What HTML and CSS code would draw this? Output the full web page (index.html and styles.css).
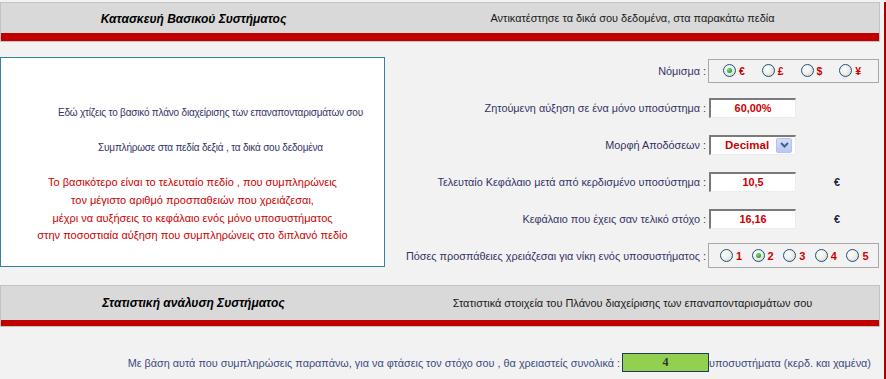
FILE: index.html
```html
<!DOCTYPE html>
<html lang="el">
<head>
<meta charset="utf-8">
<title>Κατασκευή Βασικού Συστήματος</title>
<link rel="stylesheet" href="styles.css">
</head>
<body>
<div class="page">
  <div class="frame">
    <div class="hdr hdr1">
      <div class="hdr-row">
        <div class="hdr-title">Κατασκευή Βασικού Συστήματος</div>
        <div class="hdr-sub">Αντικατέστησε τα δικά σου δεδομένα, στα παρακάτω πεδία</div>
      </div>
      <div class="hdr-red"></div>
    </div>

    <div class="main">
      <div class="info">
        <div class="info-blue">Εδώ χτίζεις το βασικό πλάνο διαχείρισης των επαναπονταρισμάτων σου</div>
        <div class="blank"></div>
        <div class="info-blue">Συμπλήρωσε στα πεδία δεξιά , τα δικά σου δεδομένα</div>
        <div class="blank"></div>
        <div class="info-red">Το βασικότερο είναι το τελευταίο πεδίο , που συμπληρώνεις</div>
        <div class="info-red">τον μέγιστο αριθμό προσπαθειών που χρειάζεσαι,</div>
        <div class="info-red">μέχρι να αυξήσεις το κεφάλαιο ενός μόνο υποσυστήματος</div>
        <div class="info-red">στην ποσοστιαία αύξηση που συμπληρώνεις στο διπλανό πεδίο</div>
      </div>

      <div class="form">
        <div class="lbl">Νόμισμα :</div>
        <div class="ctl">
          <div class="radio-box currency">
            <label class="opt"><span class="radio checked"></span><span class="opt-t">€</span></label>
            <label class="opt"><span class="radio"></span><span class="opt-t">£</span></label>
            <label class="opt"><span class="radio"></span><span class="opt-t">$</span></label>
            <label class="opt"><span class="radio"></span><span class="opt-t">¥</span></label>
          </div>
        </div>

        <div class="lbl">Ζητούμενη αύξηση σε ένα μόνο υποσύστημα :</div>
        <div class="ctl"><div class="field">60,00%</div></div>

        <div class="lbl">Μορφή Αποδόσεων :</div>
        <div class="ctl">
          <div class="field select">
            <span class="sel-t">Decimal</span>
            <span class="sel-btn"><svg width="9" height="6" viewBox="0 0 9 6"><path d="M1 1 L4.5 4.5 L8 1" fill="none" stroke="#4a5e86" stroke-width="2"/></svg></span>
          </div>
        </div>

        <div class="lbl">Τελευταίο Κεφάλαιο μετά από κερδισμένο υποσύστημα :</div>
        <div class="ctl"><div class="field">10,5</div><span class="cur">€</span></div>

        <div class="lbl">Κεφάλαιο που έχεις σαν τελικό στόχο :</div>
        <div class="ctl"><div class="field">16,16</div><span class="cur">€</span></div>

        <div class="lbl">Πόσες προσπάθειες χρειάζεσαι για νίκη ενός υποσυστήματος :</div>
        <div class="ctl">
          <div class="radio-box tries">
            <label class="opt"><span class="radio"></span><span class="opt-t">1</span></label>
            <label class="opt"><span class="radio checked"></span><span class="opt-t">2</span></label>
            <label class="opt"><span class="radio"></span><span class="opt-t">3</span></label>
            <label class="opt"><span class="radio"></span><span class="opt-t">4</span></label>
            <label class="opt"><span class="radio"></span><span class="opt-t">5</span></label>
          </div>
        </div>
      </div>
    </div>

    <div class="hdr hdr2">
      <div class="hdr-row">
        <div class="hdr-title">Στατιστική ανάλυση Συστήματος</div>
        <div class="hdr-sub">Στατιστικά στοιχεία του Πλάνου διαχείρισης των επαναπονταρισμάτων σου</div>
      </div>
      <div class="hdr-red"></div>
    </div>

    <div class="result">
      <div class="res-l">Με βάση αυτά που συμπληρώσεις παραπάνω, για να φτάσεις τον στόχο σου , θα χρειαστείς συνολικά :</div>
      <div class="res-box">4</div>
      <div class="res-r">υποσυστήματα (κερδ. και χαμένα)</div>
    </div>
  </div>
</div>
</body>
</html>
```

FILE: styles.css
```css
* { box-sizing: border-box; }
html, body { margin: 0; padding: 0; }
body {
  background: #f2f2f2;
  font-family: "Liberation Sans", Arial, sans-serif;
  font-size: 10.85px;
  color: #333366;
}
.page { width: 886px; height: 379px; overflow: hidden; }
.frame {
  width: 886px;
  height: 379px;
  border-right: 2px solid #a80000;
}

/* headers */
.hdr {
  width: 880px;
  border: 1px solid #c3c3c3;
  background: #d9d9d9;
}
.hdr1 { margin-top: 2px; }
.hdr-row { display: flex; align-items: center; height: 30px; }
.hdr2 .hdr-row { height: 34px; }
.hdr-red { height: 8px; background: #c00000; }
.hdr2 .hdr-red { height: 6px; }
.hdr-title {
  width: 385px;
  text-align: center;
  font-size: 12px;
  font-weight: bold;
  font-style: italic;
  color: #000;
  padding-top: 2px;
}
.hdr2 .hdr-title { padding-top: 0; }
.hdr-sub {
  flex: 1;
  text-align: center;
  color: #1a1a1a;
  font-size: 10.95px;
}

/* main */
.main { display: flex; height: 243px; }
.info {
  width: 385px;
  height: 210px;
  margin-top: 15px;
  border: 1px solid #31849b;
  background: #fff;
  text-align: center;
  line-height: 17.6px;
  padding-top: 46px;
}
.blank { height: 17.6px; }
.info-blue {
  color: #333366;
  font-size: 10px;
  letter-spacing: -0.2px;
  padding-left: 36px;
  white-space: nowrap;
}
.info-red { color: #cc0000; font-size: 11px; white-space: nowrap; }

.form {
  display: grid;
  grid-template-columns: 321px 176px;
  grid-auto-rows: 37px;
  column-gap: 2px;
  padding-top: 10px;
  align-items: center;
}
.lbl { text-align: right; white-space: nowrap; }
.ctl { display: flex; align-items: center; }

.radio-box {
  display: flex;
  align-items: center;
  width: 171px;
  border: 1px solid #a8a8a8;
}
.currency { height: 24px; padding-left: 14px; }
.tries { height: 25px; padding-left: 11px; }
.opt { display: flex; align-items: center; }
.currency .opt { width: 41px; }
.tries .opt { width: 32.5px; }
.opt-t { margin-left: 3px; color: #cc0000; font-weight: bold; font-size: 11px; }
.currency .opt-t { font-size: 10.5px; }

.radio {
  width: 13px;
  height: 13px;
  border-radius: 50%;
  border: 1px solid #1c5180;
  background: radial-gradient(circle at 35% 35%, #ffffff 0%, #f0f0ea 45%, #cfcfc6 100%);
  position: relative;
}
.radio.checked::after {
  content: "";
  position: absolute;
  left: 3px;
  top: 3px;
  width: 5px;
  height: 5px;
  border-radius: 50%;
  background: radial-gradient(circle at 35% 35%, #7fe07f 0%, #21a121 70%, #1a8a1a 100%);
}

.field {
  width: 87px;
  height: 20px;
  margin-left: 1px;
  background: #fff;
  border-style: solid;
  border-width: 2px 1px 1px 2px;
  border-color: #7a7a7a #ececec #ececec #7a7a7a;
  display: flex;
  align-items: center;
  justify-content: center;
  color: #cc0000;
  font-weight: bold;
}
.select { justify-content: flex-start; position: relative; }
.sel-t { margin-left: 14px; font-size: 11.5px; }
.sel-btn {
  position: absolute;
  right: 3px;
  top: 1px;
  width: 16px;
  height: 15px;
  background: linear-gradient(#d3ddfb, #b7c8f5);
  border: 1px solid #b2c3ec;
  border-radius: 2px;
  display: flex;
  align-items: center;
  justify-content: center;
}
.cur { margin-left: 38px; color: #222244; font-weight: bold; }

/* result */
.result {
  display: flex;
  align-items: center;
  margin-top: 26px;
  height: 19px;
}
.res-l { width: 620px; text-align: right; color: #3b4a80; white-space: nowrap; }
.res-box {
  width: 87px;
  height: 19px;
  margin-left: 2px;
  background: #92d050;
  border: 1px solid #203864;
  display: flex;
  align-items: center;
  justify-content: center;
  font-family: "Liberation Serif", "Times New Roman", serif;
  font-weight: bold;
  font-size: 12px;
  color: #333;
}
.res-r { color: #3b4a80; white-space: nowrap; }
```
